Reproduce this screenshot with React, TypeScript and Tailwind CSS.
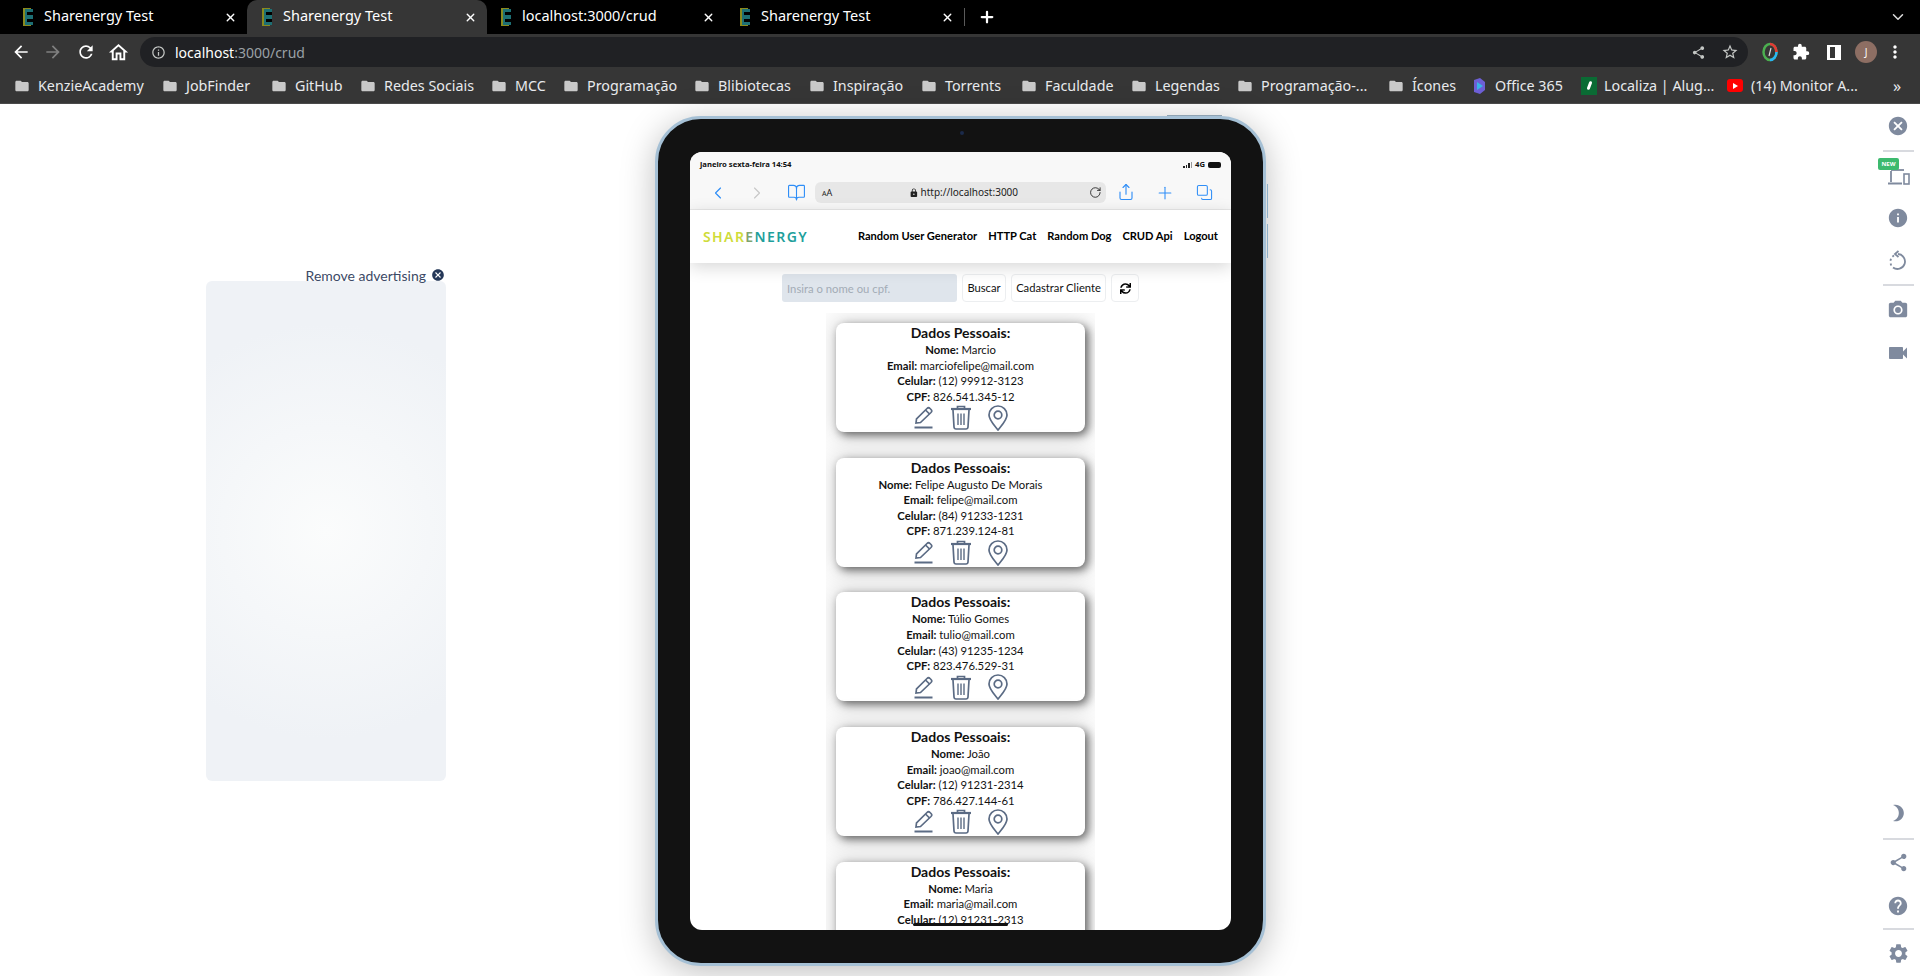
import React from "react";
import {
  MdArrowBack,
  MdArrowForward,
  MdRefresh,
  MdOutlineHome,
  MdInfoOutline,
  MdFolder,
  MdStarBorder,
  MdExtension,
  MdMoreVert,
  MdCancel,
  MdInfo,
  MdCameraAlt,
  MdVideocam,
  MdBrightness3,
  MdShare,
  MdHelp,
  MdSettings,
  MdLock,
} from "react-icons/md";
import { FaSync } from "react-icons/fa";
import { ChevronLeft, ChevronRight, BookOpen, RotateCw, Share, Plus, Copy, X, ChevronDown } from "lucide-react";

const tabs = [
  { title: "Sharenergy Test", width: "w-[247px]", pl: "pl-[23px]", close: "pr-[10px]" },
  { title: "Sharenergy Test", width: "w-[240px]", pl: "pl-[15px]", close: "pr-[10px]", active: true },
  { title: "localhost:3000/crud", width: "w-[238px]", pl: "pl-[14px]", close: "pr-[10px]" },
  { title: "Sharenergy Test", width: "w-[239px]", pl: "pl-[15px]", close: "pr-[10px]" },
];

const bookmarks = [
  { label: "KenzieAcademy", w: "w-[107px]" },
  { label: "JobFinder", w: "w-[68px]" },
  { label: "GitHub", w: "w-[48px]" },
  { label: "Redes Sociais", w: "w-[90px]" },
  { label: "MCC", w: "w-[31px]" },
  { label: "Programação", w: "w-[90px]" },
  { label: "Blibiotecas", w: "w-[74px]" },
  { label: "Inspiração", w: "w-[71px]" },
  { label: "Torrents", w: "w-[59px]" },
  { label: "Faculdade", w: "w-[69px]" },
  { label: "Legendas", w: "w-[65px]" },
  { label: "Programação-...", w: "w-[110px]" },
  { label: "Ícones", w: "w-[43px]" },
];

const people = [
  { nome: "Marcio", email: "marciofelipe@mail.com", celular: "(12) 99912-3123", cpf: "826.541.345-12" },
  { nome: "Felipe Augusto De Morais", email: "felipe@mail.com", celular: "(84) 91233-1231", cpf: "871.239.124-81" },
  { nome: "Túlio Gomes", email: "tulio@mail.com", celular: "(43) 91235-1234", cpf: "823.476.529-31" },
  { nome: "João", email: "joao@mail.com", celular: "(12) 91231-2314", cpf: "786.427.144-61" },
  { nome: "Maria", email: "maria@mail.com", celular: "(12) 91231-2313", cpf: "" },
];

const navLinks = ["Random User Generator", "HTTP Cat", "Random Dog", "CRUD Api", "Logout"];

function Favicon() {
  return (
    <svg width="10" height="20" viewBox="0 0 10 20" className="shrink-0">
      <rect x="0" y="1" width="8" height="18" fill="#8a8a1e" />
      <rect x="2" y="2" width="8" height="16" fill="#1d6f74" />
      <rect x="4" y="5" width="6" height="3" fill="#000" />
      <rect x="4" y="12" width="6" height="3" fill="#000" />
    </svg>
  );
}

function TabStrip() {
  return (
    <div className="flex h-[34px] items-stretch bg-black text-white">
      {tabs.map((tab, i) => (
        <div
          key={i}
          className={
            tab.active
              ? `${tab.width} ${tab.pl} ${tab.close} flex items-center gap-[11px] rounded-t-[10px] bg-[#363636]`
              : `${tab.width} ${tab.pl} ${tab.close} flex items-center gap-[11px]`
          }
        >
          <Favicon />
          <span className="mt-[-2px] flex-1 truncate text-[14.5px]">{tab.title}</span>
          <X size={13} strokeWidth={2.5} />
        </div>
      ))}
      <div className="my-[8px] w-px bg-[#5a5a5a]" />
      <div className="flex w-[42px] items-center justify-center pl-[1px]">
        <Plus size={18} strokeWidth={3} />
      </div>
      <div className="flex flex-1 items-center justify-end pr-[13px]">
        <ChevronDown size={18} strokeWidth={2} color="#dcdcdc" />
      </div>
    </div>
  );
}

function ColorWheel() {
  return (
    <svg width="16" height="20" viewBox="0 0 16 20">
      <ellipse cx="8" cy="10" rx="6.5" ry="8" fill="none" stroke="#4caf50" strokeWidth="2.5" />
      <path d="M8 2 A6.5 8 0 0 1 14.5 10" fill="none" stroke="#e53935" strokeWidth="2.5" />
      <path d="M14.5 10 A6.5 8 0 0 1 8 18" fill="none" stroke="#29b6f6" strokeWidth="2.5" />
      <path d="M9 6 L7 14" stroke="#e0e0e0" strokeWidth="1.2" />
    </svg>
  );
}

function Toolbar() {
  return (
    <div className="flex h-[36px] items-center bg-[#363636] text-white">
      <div className="flex w-[140px] items-center pl-[11px]">
        <MdArrowBack size={20} />
        <MdArrowForward size={20} color="#808080" className="ml-[12px]" />
        <MdRefresh size={20} className="ml-[13px]" />
        <MdOutlineHome size={23} className="ml-[11px]" />
      </div>
      <div className="flex h-[30px] w-[1608px] items-center rounded-full bg-[#202124] pl-[11px] pr-[9px]">
        <MdInfoOutline size={15} color="#c4c7c5" />
        <span className="ml-[9px] text-[14px] text-white">localhost</span>
        <span className="text-[14px] text-[#9aa0a6]">:3000/crud</span>
        <div className="flex-1" />
        <MdShare size={15} color="#c4c7c5" />
        <MdStarBorder size={18} color="#c4c7c5" className="ml-[15px]" />
      </div>
      <div className="flex flex-1 items-center pl-[14px]">
        <ColorWheel />
        <MdExtension size={18} className="ml-[14px]" />
        <div className="ml-[17px] h-[15px] w-[14px] border-x-[3px] border-y-[2px] border-white border-r-[6px]" />
        <div className="ml-[14px] flex size-[22px] items-center justify-center rounded-full bg-[#8d6e63] text-[10px]">
          J
        </div>
        <MdMoreVert size={20} className="ml-[8px]" />
      </div>
    </div>
  );
}

function Bookmarks() {
  return (
    <div className="flex h-[34px] items-center gap-[17px] border-b border-[#4a4a4a] bg-[#363636] pb-[2px] pl-[14px] text-[14.3px] text-[#e8eaed]">
      {bookmarks.map((b) => (
        <div key={b.label} className="flex items-center gap-[8px]">
          <MdFolder size={16} color="#c9c9c9" />
          <span className={`${b.w} whitespace-nowrap`}>{b.label}</span>
        </div>
      ))}
      <div className="flex items-center gap-[8px]">
        <svg width="15" height="18" viewBox="0 0 15 18">
          <path d="M2 3 L8 1 L13 5 L13 13 L8 17 L2 15 Z" fill="#6d5fd6" />
          <path d="M5 5 L11 9 L5 13 Z" fill="#38b6e8" />
        </svg>
        <span className="w-[69px] whitespace-nowrap">Office 365</span>
      </div>
      <div className="flex items-center gap-[7px]">
        <div className="flex h-[18px] w-[16px] items-center justify-center bg-[#0a6b34]">
          <div className="h-[9px] w-[3px] rotate-[20deg] rounded-full bg-white" />
        </div>
        <span className="w-[106px] whitespace-nowrap">Localiza | Alug...</span>
      </div>
      <div className="flex items-center gap-[8px]">
        <div className="flex h-[13px] w-[16px] items-center justify-center rounded-[3px] bg-[#f00]">
          <div className="h-0 w-0 border-y-[3px] border-l-[5px] border-y-transparent border-l-white" />
        </div>
        <span className="w-[111px] whitespace-nowrap">(14) Monitor A...</span>
      </div>
      <span className="ml-[14px] text-[16px]">»</span>
    </div>
  );
}

function AdColumn() {
  return (
    <div className="w-[655px] shrink-0 pl-[206px] pt-[161px]">
      <div className="relative z-10 flex h-[20px] w-[240px] items-center justify-end gap-[5px] pr-[1px] font-['Lato',sans-serif] text-[14px] text-[#3c4a66]">
        <span>Remove advertising</span>
        <MdCancel size={14} color="#253858" />
      </div>
      <div className="mt-[-4px] h-[500px] w-[240px] rounded-[6px] bg-[radial-gradient(circle_at_50%_50%,#fbfcfc,#eff2f6_75%)]" />
    </div>
  );
}

function StatusBar() {
  return (
    <div className="flex h-[26px] items-center justify-between px-[10px] text-[7.7px] font-bold text-[#111]">
      <span>janeiro sexta-feira 14:54</span>
      <div className="flex items-center gap-[3px]">
        <div className="flex items-end gap-[1px]">
          <div className="h-[2px] w-[1.5px] bg-[#222]" />
          <div className="h-[3px] w-[1.5px] bg-[#222]" />
          <div className="h-[5px] w-[1.5px] bg-[#222]" />
          <div className="h-[6px] w-[1.5px] bg-[#999]" />
        </div>
        <span>4G</span>
        <div className="h-[6px] w-[13px] rounded-[2px] bg-[#111]" />
      </div>
    </div>
  );
}

function SafariBar() {
  return (
    <div className="flex h-[32px] items-start border-b border-[#e8e8e8] pl-[18px] pt-[4px] text-[#2f8ef7]">
      <ChevronLeft size={20} strokeWidth={1.4} className="mt-[1px]" />
      <ChevronRight size={20} strokeWidth={1.4} color="#c8c8c8" className="ml-[19px] mt-[1px]" />
      <BookOpen size={19} strokeWidth={1.4} className="ml-[20px] mt-[1px]" />
      <div className="ml-[9px] flex h-[21px] w-[291px] items-center rounded-[6px] bg-[#e7e7e7] pl-[7px] pr-[4px] text-[#222]">
        <span className="w-[89px] text-[9px]">
          <span className="text-[7px]">A</span>A
        </span>
        <MdLock size={10} />
        <span className="ml-[2px] w-[173px] text-[10px]">http://localhost:3000</span>
        <RotateCw size={13} strokeWidth={1.5} color="#111" />
      </div>
      <Share size={18} strokeWidth={1.5} className="ml-[11px] mt-[1px]" />
      <Plus size={20} strokeWidth={1.3} className="ml-[20px] mt-[1px]" />
      <Copy size={17} strokeWidth={1.5} className="ml-[21px] mt-[2px] scale-x-[-1] scale-y-[-1]" />
    </div>
  );
}

function SiteNav() {
  return (
    <div className="relative z-10 flex h-[53px] shrink-0 items-center justify-between bg-white px-[13px] shadow-[0_4px_16px_rgba(0,0,0,0.16)]">
      <span className="text-[14px] font-semibold tracking-[1.4px]">
        <span className="text-[#cfdc3a]">SHAR</span>
        <span className="text-[#7fa46c]">E</span>
        <span className="text-[#1f9f9c]">NERGY</span>
      </span>
      <div className="flex gap-[11px] font-['Lato',sans-serif] text-[11.1px] font-bold text-black">
        {navLinks.map((link) => (
          <span key={link}>{link}</span>
        ))}
      </div>
    </div>
  );
}

function SearchRow() {
  return (
    <div className="mt-[11px] flex shrink-0 justify-center gap-[5px] font-['Lato',sans-serif] text-[11.2px] text-[#111]">
      <input
        placeholder="Insira o nome ou cpf."
        className="h-[28px] w-[175px] rounded-[3px] bg-[#dfe5ec] pl-[5px] text-[11.3px] placeholder:text-[#a3acb6]"
      />
      <button className="h-[28px] w-[44px] rounded-[4px] border border-[#eceef0] bg-white">Buscar</button>
      <button className="h-[28px] w-[95px] rounded-[4px] border border-[#eceef0] bg-white">Cadastrar Cliente</button>
      <button className="flex h-[28px] w-[28px] items-center justify-center rounded-[4px] border border-[#eceef0] bg-white">
        <FaSync size={11} color="#000" />
      </button>
    </div>
  );
}

function PencilIcon() {
  return (
    <svg width="20" height="23" viewBox="0 0 20 23" fill="none" stroke="#5b6b84" strokeWidth="1.7">
      <path d="M2 17 L2.5 13 L13 2.5 Q14.5 1 16 2.5 L17 3.5 Q18.5 5 17 6.5 L6.5 16.5 Z" />
      <path d="M11.5 4 L15.5 8" />
      <path d="M0.5 21.5 H18.5" strokeWidth="2" />
    </svg>
  );
}

function TrashIcon() {
  return (
    <svg width="22" height="25" viewBox="0 0 22 25" fill="none" stroke="#5b6b84" strokeWidth="1.7">
      <path d="M1 4 H21" strokeWidth="2.2" />
      <path d="M7.5 3.5 V1.5 H14.5 V3.5" />
      <path d="M3 5 L4 22 Q4.2 24 6 24 H16 Q17.8 24 18 22 L19 5" />
      <path d="M8 8.5 V20 M11 8.5 V20 M14 8.5 V20" strokeWidth="1.4" />
    </svg>
  );
}

function PinIcon() {
  return (
    <svg width="20" height="26" viewBox="0 0 20 26" fill="none" stroke="#5b6b84" strokeWidth="1.7">
      <path d="M10 25 C6 20 1 15 1 10 A9 9 0 0 1 19 10 C19 15 14 20 10 25 Z" />
      <circle cx="10" cy="10" r="3.8" />
    </svg>
  );
}

function PersonCard({ person }: { person: (typeof people)[number] }) {
  return (
    <div className="h-[109px] w-[249px] shrink-0 rounded-[8px] bg-white text-center font-['Lato',sans-serif] text-[11.3px] leading-[15.6px] text-[#111] shadow-[3px_3px_10px_rgba(0,0,0,0.6),0_0_24px_8px_rgba(0,0,0,0.1)]">
      <h2 className="h-[19px] text-[14px] font-bold leading-[20px]">Dados Pessoais:</h2>
      <p>
        <b>Nome:</b> {person.nome}
      </p>
      <p>
        <b>Email:</b> {person.email}
      </p>
      <p>
        <b>Celular:</b> {person.celular}
      </p>
      <p className="h-[15.6px]">
        {person.cpf && (
          <>
            <b>CPF:</b> {person.cpf}
          </>
        )}
      </p>
      <div className="flex h-[27px] items-center justify-center gap-[16px]">
        <PencilIcon />
        <TrashIcon />
        <PinIcon />
      </div>
    </div>
  );
}

function Device() {
  return (
    <div className="relative mt-[12px] h-[850px] w-[611px] shrink-0 rounded-[46px] border-[3px] border-[#a5c0d5] bg-[#121212] px-[32px] pt-[33px] shadow-[0_6px_34px_rgba(0,0,0,0.26)]">
      <div className="absolute left-[302px] top-[12px] size-[4px] rounded-full bg-[#1b2a4a]" />
      <div className="absolute left-[509px] top-[-4px] h-[1px] w-[55px] bg-[#8fa3b3]" />
      <div className="absolute right-[-5px] top-[65px] h-[34px] w-[1px] bg-[#8fb0c8]" />
      <div className="absolute right-[-5px] top-[105px] h-[34px] w-[1px] bg-[#8fb0c8]" />

      <div className="relative flex h-[778px] w-[541px] flex-col overflow-hidden rounded-[12px] bg-white">
        <div className="shrink-0 bg-[#f8f8f8]">
          <StatusBar />
          <SafariBar />
        </div>
        <SiteNav />
        <SearchRow />
        <div className="mx-auto mt-[11px] flex w-[269px] flex-col items-center gap-[25.7px] overflow-hidden px-[10px] pt-[10px]">
          {people.map((p) => (
            <PersonCard key={p.email} person={p} />
          ))}
        </div>
        <div className="absolute bottom-[4px] left-[223px] h-[3px] w-[95px] rounded-full bg-[#111]" />
      </div>
    </div>
  );
}

function DeviceToggleIcon() {
  return (
    <svg width="24" height="18" viewBox="0 0 24 18" fill="none" stroke="#7f8a9e" strokeWidth="1.8">
      <path d="M4 2 V13" />
      <path d="M1 14.5 H15" strokeWidth="2" />
      <path d="M4 1 H17" />
      <rect x="17" y="5" width="5" height="10" strokeWidth="1.6" />
    </svg>
  );
}

function RotateIcon() {
  return (
    <svg width="20" height="20" viewBox="0 0 20 20" fill="none" stroke="#7f8a9e" strokeWidth="1.8">
      <path d="M10 4 A7.5 7.5 0 1 1 5 17.5" />
      <path d="M3.2 15.5 L2.6 13.5 M2.4 10.8 L3 8.8 M4.4 6.8 L6 5.4" />
      <path d="M10.5 1 L7 4 L10.5 7" />
    </svg>
  );
}

function Sidebar() {
  const divider = "h-[2px] w-[31px] bg-[#d8dadf]";
  return (
    <div className="flex w-[44px] shrink-0 flex-col items-center justify-between">
      <div className="flex w-full flex-col items-center">
        <div className="flex h-[44px] items-center">
          <MdCancel size={22} color="#7f8a9e" />
        </div>
        <div className={`mt-[2px] ${divider}`} />
        <div className="relative mt-[6px] flex h-[40px] w-full items-center justify-center pl-[2px]">
          <DeviceToggleIcon />
          <div className="absolute left-[2px] top-0 flex h-[12px] w-[21px] items-center justify-center rounded-[2px] bg-[#3dba6e] text-[6px] font-bold text-white">
            NEW
          </div>
        </div>
        <div className="flex h-[40px] items-center">
          <MdInfo size={22} color="#7f8a9e" />
        </div>
        <div className="flex h-[44px] items-center">
          <RotateIcon />
        </div>
        <div className={`mt-[2px] ${divider}`} />
        <div className="flex h-[48px] items-center">
          <MdCameraAlt size={22} color="#7f8a9e" />
        </div>
        <div className="flex h-[38px] items-center">
          <MdVideocam size={24} color="#7f8a9e" />
        </div>
      </div>
      <div className="flex w-full flex-col items-center">
        <div className="flex h-[50px] items-center">
          <MdBrightness3 size={20} color="#7f8a9e" />
        </div>
        <div className={divider} />
        <div className="flex h-[44px] items-center">
          <MdShare size={21} color="#7f8a9e" />
        </div>
        <div className="flex h-[44px] items-center">
          <MdHelp size={22} color="#7f8a9e" />
        </div>
        <div className={divider} />
        <div className="flex h-[46px] items-center">
          <MdSettings size={23} color="#7f8a9e" />
        </div>
      </div>
    </div>
  );
}

export default function App() {
  return (
    <div className="flex h-[976px] w-[1920px] flex-col overflow-hidden bg-white font-['Noto_Sans',sans-serif]">
      <TabStrip />
      <Toolbar />
      <Bookmarks />
      <div className="flex flex-1">
        <AdColumn />
        <div>
          <Device />
        </div>
        <div className="flex-1" />
        <Sidebar />
      </div>
    </div>
  );
}
